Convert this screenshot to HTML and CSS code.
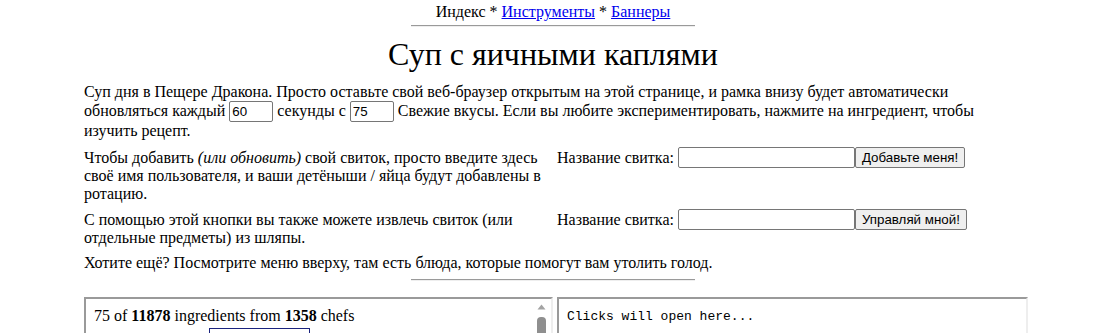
FILE: index.html
```html
<!DOCTYPE html>
<html lang="ru">
<head>
<meta charset="utf-8">
<title>Суп с яичными каплями</title>
<link rel="stylesheet" href="styles.css">
</head>
<body>
<div class="page">
  <div class="nav">Индекс * <a href="#">Инструменты</a> * <a href="#">Баннеры</a></div>
  <hr class="rule rule-top">
  <h1 class="title">Суп с яичными каплями</h1>
  <p class="intro">Суп дня в Пещере Дракона. Просто оставьте свой веб-браузер открытым на этой странице, и рамка внизу будет автоматически обновляться каждый <input class="num" type="text" value="60"> секунды с <input class="num" type="text" value="75"> Свежие вкусы. Если вы любите экспериментировать, нажмите на ингредиент, чтобы изучить рецепт.</p>
  <div class="forms">
    <div class="desc">Чтобы добавить <i>(или обновить)</i> свой свиток, просто введите здесь своё имя пользователя, и ваши детёныши / яйца будут добавлены в ротацию.</div>
    <div class="field"><span class="label">Название свитка:</span><input class="name" type="text"><button class="btn" type="button">Добавьте меня!</button></div>
    <div class="desc">С помощью этой кнопки вы также можете извлечь свиток (или отдельные предметы) из шляпы.</div>
    <div class="field"><span class="label">Название свитка:</span><input class="name" type="text"><button class="btn" type="button">Управляй мной!</button></div>
  </div>
  <p class="more">Хотите ещё? Посмотрите меню вверху, там есть блюда, которые помогут вам утолить голод.</p>
  <hr class="rule rule-bottom">
  <div class="frames">
    <div class="frame frame-left">
      <div class="frame-body">
        <div class="count">75 of <b>11878</b> ingredients from <b>1358</b> chefs</div>
        <div class="egg"></div>
      </div>
      <div class="scrollbar">
        <svg class="arrow" width="9" height="6" viewBox="0 0 9 6"><path d="M0.5 5.5 L4.5 0.5 L8.5 5.5 Z" fill="#a3a3a3"/></svg>
        <div class="thumb"></div>
      </div>
    </div>
    <div class="frame frame-right">
      <div class="clicks">Clicks will open here...</div>
    </div>
  </div>
</div>
</body>
</html>
```

FILE: styles.css
```css
html, body {
  margin: 0;
  padding: 0;
  background: #ffffff;
}
body {
  font-family: "Liberation Serif", "Times New Roman", serif;
  font-size: 16px;
  line-height: normal;
  color: #000000;
  overflow: hidden;
}
.page {
  width: 938px;
  margin-left: 84px;
  display: flex;
  flex-direction: column;
}
.nav {
  text-align: center;
  padding-top: 3px;
}
.nav a {
  color: #0000ee;
}
.rule {
  width: 284px;
  height: 0;
  margin: 0 auto;
  border: 0;
  border-top: 1px solid #9a9a9a;
  border-bottom: 1px solid #eeeeee;
}
.rule-top {
  margin-top: 4px;
}
.title {
  font-size: 32px;
  font-weight: normal;
  text-align: center;
  margin: 9px 0 0 0;
  line-height: normal;
}
.intro {
  margin: 10px 0 0 0;
}
.num {
  width: 38px;
  height: 17px;
  box-sizing: content-box;
  padding: 1px 2px;
  border: 1px solid #767676;
  border-radius: 2px;
  font-family: "Liberation Sans", Arial, sans-serif;
  font-size: 13.33px;
  vertical-align: baseline;
  margin: 0;
}
.forms {
  display: grid;
  grid-template-columns: 465px 1fr;
  column-gap: 8px;
  row-gap: 8px;
  margin-top: 9px;
}
.field {
  display: flex;
  align-items: center;
  height: 21px;
  margin-top: -2px;
}
.label {
  margin-right: 4px;
}
.name {
  width: 171px;
  height: 17px;
  padding: 1px 2px;
  border: 1px solid #767676;
  border-radius: 2px;
  margin: 0;
  font-family: "Liberation Sans", Arial, sans-serif;
  font-size: 13.33px;
}
.btn {
  height: 21px;
  padding: 0 6px;
  margin: 0;
  background: #efefef;
  border: 1px solid #767676;
  border-radius: 2px;
  font-family: "Liberation Sans", Arial, sans-serif;
  font-size: 13.33px;
  color: #000000;
}
.more {
  margin: 7px 0 0 0;
}
.rule-bottom {
  margin-top: 7px;
}
.frames {
  display: flex;
  gap: 4px;
  margin-top: 16px;
  width: 946px;
}
.frame {
  height: 120px;
  border-style: solid;
  border-width: 2px;
  border-color: #9a9a9a #eeeeee #eeeeee #9a9a9a;
  box-sizing: border-box;
  display: flex;
}
.frame-left {
  width: 469px;
}
.frame-right {
  width: 471px;
}
.frame-body {
  flex: 1;
  padding: 8px 0 0 8px;
}
.egg {
  margin: 3px 0 0 115px;
  width: 99px;
  height: 40px;
  border: 1px solid #1a237e;
}
.scrollbar {
  width: 17px;
  background: #ffffff;
  display: flex;
  flex-direction: column;
  align-items: center;
  padding-top: 5px;
}
.arrow {
  display: block;
  margin-left: -2px;
}
.thumb {
  margin-top: 7px;
  margin-left: -2px;
  width: 9px;
  height: 60px;
  background: #8f8f8f;
  border-radius: 4px;
}
.clicks {
  font-family: "Liberation Mono", "DejaVu Sans Mono", monospace;
  font-size: 13px;
  padding: 10px 0 0 8px;
}
```
